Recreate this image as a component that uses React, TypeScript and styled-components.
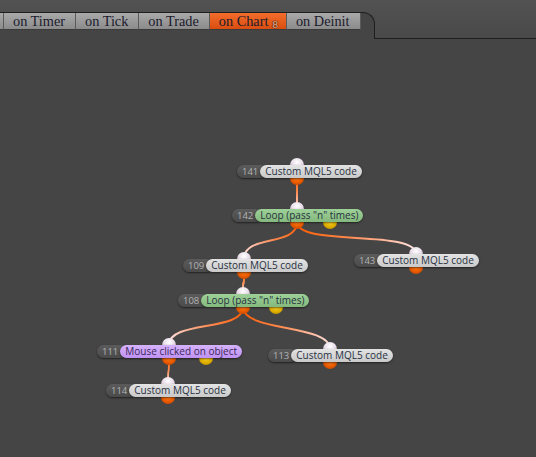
import React from "react";
import styled, { createGlobalStyle } from "styled-components";

const GlobalStyle = createGlobalStyle`
  html, body { margin: 0; padding: 0; background: #454545; overflow: hidden; }
  #root { width: 536px; height: 457px; }
`;

const HEADER_H = 39;

const Page = styled.div`
  width: 536px;
  height: 457px;
  display: flex;
  flex-direction: column;
  background: #454545;
`;

const Header = styled.div`
  height: ${HEADER_H}px;
  flex: none;
  display: flex;
  background: linear-gradient(#525252, #494949);
`;

const TabStrip = styled.div`
  margin-top: 12px;
  width: 375px;
  flex: none;
  box-sizing: border-box;
  border-top: 1px solid #1e1e1e;
  border-right: 1px solid #1e1e1e;
  border-top-right-radius: 12px;
  background: #454545;
  display: flex;
  align-items: flex-start;
`;

const HeaderRest = styled.div`
  flex: 1;
  border-bottom: 1px solid #1e1e1e;
`;

const Tab = styled.div<{ $active?: boolean; $edge?: boolean }>`
  height: 17px;
  box-sizing: border-box;
  padding: ${(p) => (p.$edge ? "0" : "0 10px 0 9px")};
  width: ${(p) => (p.$edge ? "4px" : "auto")};
  border-right: 1px solid #5a5a5a;
  border-bottom: 1px solid #3a3a3a;
  background: ${(p) =>
    p.$active
      ? "linear-gradient(#f36d2c, #d94e10)"
      : "linear-gradient(#a9a9a9, #8b8b8b)"};
  font-family: "Liberation Serif", "Times New Roman", serif;
  font-size: 14.3px;
  line-height: 16px;
  color: #1a1a2c;
  white-space: nowrap;
`;

const TabBadge = styled.span`
  font-size: 11px;
  color: #f8c8a4;
  text-shadow: 0 0 1px #3a1000, 0 0 1px #3a1000, 0 0 1px #3a1000;
  position: relative;
  top: 2px;
  margin-left: 4px;
  margin-right: -2px;
`;

const Canvas = styled.div`
  flex: 1;
  position: relative;
  overflow: hidden;
`;

const Wires = styled.svg`
  position: absolute;
  left: 0;
  top: 0;
  width: 536px;
  height: 418px;
`;

const NodeBox = styled.div`
  position: absolute;
  display: flex;
  align-items: center;
`;

const Port = styled.div<{ $kind: "in" | "out" | "aux" }>`
  position: absolute;
  width: 14px;
  height: 14px;
  border-radius: 50%;
  transform: translate(-50%, -50%);
  background: ${(p) =>
    p.$kind === "in"
      ? "radial-gradient(circle at 50% 30%, #ffffff 0%, #eadfea 40%, #a596a5 100%)"
      : p.$kind === "out"
      ? "radial-gradient(circle at 50% 35%, #ff8c3a 0%, #f26200 50%, #b43a00 100%)"
      : "radial-gradient(circle at 50% 35%, #ffe34a 0%, #e6b400 55%, #a67a00 100%)"};
`;

const NumberPill = styled.div`
  position: relative;
  height: 13px;
  line-height: 13px;
  padding: 0 9px 0 5px;
  margin-right: -7px;
  border-radius: 7px;
  background: linear-gradient(#5b5b5b, #4a4a4a);
  box-shadow: 0 1px 2px rgba(0, 0, 0, 0.55);
  font-family: "Open Sans", "DejaVu Sans", sans-serif;
  font-size: 9.5px;
  color: #b2b2b2;
`;

const palette = {
  gray: "linear-gradient(#e3e3e3, #c9c9c9)",
  green: "linear-gradient(#9ed198, #84b97e)",
  purple: "linear-gradient(#d6b2fc, #bf92f3)",
};

const Label = styled.div<{ $tone: keyof typeof palette }>`
  position: relative;
  height: 13px;
  line-height: 13px;
  padding: 0 5px;
  border-radius: 7px;
  background: ${(p) => palette[p.$tone]};
  box-shadow: 0 1px 2px rgba(0, 0, 0, 0.5);
  font-family: "Open Sans", "DejaVu Sans", sans-serif;
  font-size: 10px;
  color: ${(p) => (p.$tone === "purple" ? "#3a2858" : "#27313f")};
  white-space: nowrap;
`;

type NodeData = {
  id: number;
  x: number;
  y: number;
  label: string;
  tone: keyof typeof palette;
  port: number;
  aux?: number;
};

const nodes: NodeData[] = [
  { id: 141, x: 237, y: 165, label: "Custom MQL5 code", tone: "gray", port: 297 },
  { id: 142, x: 232, y: 209, label: 'Loop (pass "n" times)', tone: "green", port: 297, aux: 330 },
  { id: 109, x: 183, y: 259, label: "Custom MQL5 code", tone: "gray", port: 244 },
  { id: 143, x: 354, y: 254, label: "Custom MQL5 code", tone: "gray", port: 416 },
  { id: 108, x: 178, y: 294, label: 'Loop (pass "n" times)', tone: "green", port: 243, aux: 276 },
  { id: 111, x: 97, y: 345, label: "Mouse clicked on object", tone: "purple", port: 169, aux: 206 },
  { id: 113, x: 268, y: 349, label: "Custom MQL5 code", tone: "gray", port: 330 },
  { id: 114, x: 106, y: 384, label: "Custom MQL5 code", tone: "gray", port: 168 },
];

const links: [number, number][] = [
  [141, 142],
  [142, 109],
  [142, 143],
  [109, 108],
  [108, 111],
  [108, 113],
  [111, 114],
];

const PILL_H = 13;
const byId = (id: number) => nodes.find((n) => n.id === id)!;

function Wire({ from, to, idx }: { from: NodeData; to: NodeData; idx: number }) {
  const x1 = from.port;
  const y1 = from.y - HEADER_H + PILL_H;
  const x2 = to.port;
  const y2 = to.y - HEADER_H;
  const d = 25;
  const gid = `wire${idx}`;
  return (
    <g>
      <defs>
        <linearGradient id={gid} gradientUnits="userSpaceOnUse" x1={x1} y1={y1} x2={x2} y2={y2}>
          <stop offset="0" stopColor="#ff5a00" />
          <stop offset="0.45" stopColor="#ff8a50" />
          <stop offset="1" stopColor="#ffe4e4" />
        </linearGradient>
      </defs>
      <path
        d={`M${x1},${y1} C${x1},${y1 + d} ${x2},${y2 - d} ${x2},${y2}`}
        fill="none"
        stroke={`url(#${gid})`}
        strokeWidth={2}
      />
    </g>
  );
}

function Node({ n }: { n: NodeData }) {
  const top = n.y - HEADER_H;
  return (
    <NodeBox style={{ left: n.x, top }}>
      <Port $kind="in" style={{ left: n.port - n.x, top: 0 }} />
      <Port $kind="out" style={{ left: n.port - n.x, top: PILL_H }} />
      {n.aux !== undefined && <Port $kind="aux" style={{ left: n.aux - n.x, top: PILL_H }} />}
      <NumberPill>{n.id}</NumberPill>
      <Label $tone={n.tone}>{n.label}</Label>
    </NodeBox>
  );
}

export default function App() {
  return (
    <Page>
      <GlobalStyle />
      <Header>
        <TabStrip>
          <Tab $edge />
          <Tab>on Timer</Tab>
          <Tab>on Tick</Tab>
          <Tab>on Trade</Tab>
          <Tab $active>
            on Chart<TabBadge>8</TabBadge>
          </Tab>
          <Tab>on Deinit</Tab>
        </TabStrip>
        <HeaderRest />
      </Header>
      <Canvas>
        <Wires viewBox="0 0 536 418">
          {links.map(([a, b], i) => (
            <Wire key={i} idx={i} from={byId(a)} to={byId(b)} />
          ))}
        </Wires>
        {nodes.map((n) => (
          <Node key={n.id} n={n} />
        ))}
      </Canvas>
    </Page>
  );
}
